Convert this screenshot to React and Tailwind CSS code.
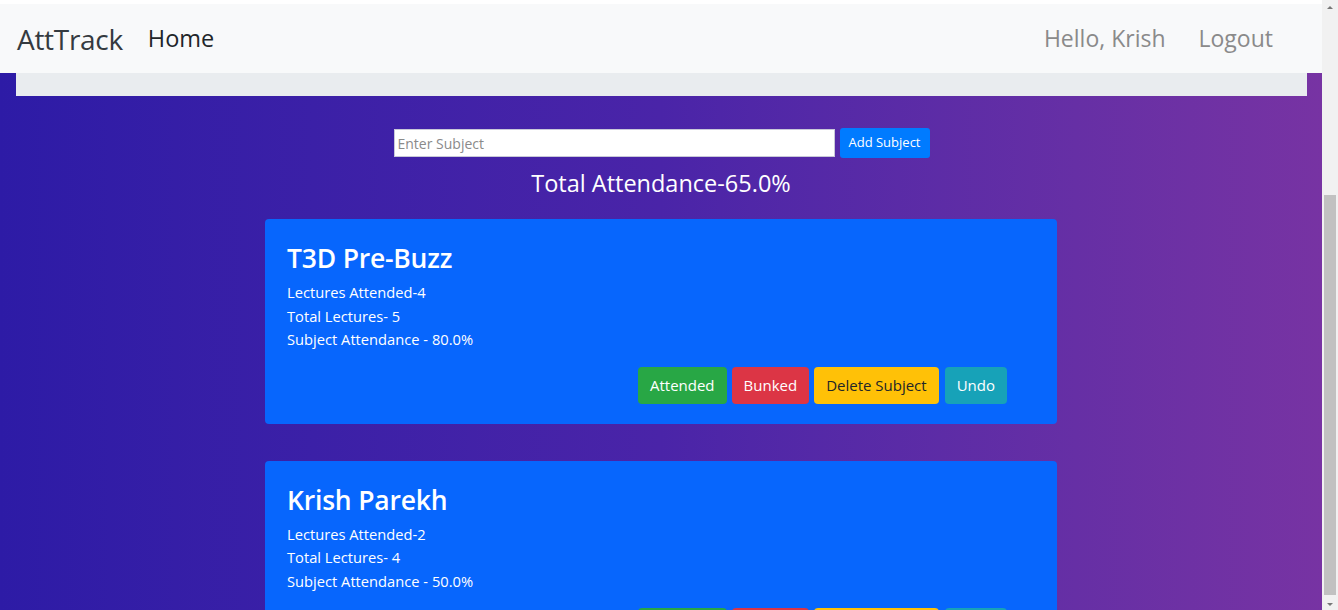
import React from "react";

const font = { fontFamily: '"Open Sans", "Noto Sans", sans-serif' };

function Card({ title, attended, total, pct }) {
  return (
    <div className="w-[792px] shrink-0 rounded-[4px] bg-[#0766fd] px-[22px] pt-[23px] pb-[20px] text-white">
      <h2 className="text-[26.5px] font-semibold leading-[32px] tracking-[-0.2px]">{title}</h2>
      <div className="mt-[7px] text-[14.7px] leading-[23.5px]">
        <p>Lectures Attended-{attended}</p>
        <p>Total Lectures- {total}</p>
        <p>Subject Attendance - {pct}</p>
      </div>
      <div className="mt-[15px] flex justify-end gap-[5px] pr-[28px] text-[15px]">
        <button className="h-[37px] rounded-[4px] bg-[#28a745] px-[12px] text-white">Attended</button>
        <button className="h-[37px] rounded-[4px] bg-[#dc3545] px-[12px] text-white">Bunked</button>
        <button className="h-[37px] rounded-[4px] bg-[#ffc107] px-[12px] text-[#212529]">Delete Subject</button>
        <button className="ml-[1px] h-[37px] rounded-[4px] bg-[#17a2b8] px-[12px] text-white">Undo</button>
      </div>
    </div>
  );
}

export default function App() {
  return (
    <div className="flex h-[610px] w-[1338px] overflow-hidden bg-white" style={font}>
      <div className="flex min-w-0 flex-1 flex-col">
        <div className="h-[4px] shrink-0 bg-white" />
        <nav className="flex h-[69px] shrink-0 items-center bg-[#f8f9fa] pl-[17px] pr-[49px]">
          <span className="text-[28px] text-[#343a40] tracking-[-0.3px]">AttTrack</span>
          <span className="ml-[25px] text-[23.5px] text-[#212529]">Home</span>
          <div className="ml-auto flex gap-[33px] text-[23px] text-[#8a8a8a]">
            <span>Hello, Krish</span>
            <span>Logout</span>
          </div>
        </nav>
        <div className="flex flex-1 flex-col bg-gradient-to-r from-[#2d1ba6] via-[#4a24a8] to-[#7733a3]">
          <div className="ml-[16px] mr-[15px] h-[23px] shrink-0 bg-[#e9ecef]" />
          <div className="flex flex-col items-center">
            <div className="mt-[32px] flex items-center gap-[5px] pl-[1px]">
              <input
                placeholder="Enter Subject"
                className="h-[28px] w-[441px] border border-[#c8c8d8] bg-white px-[3px] text-[14px] text-[#333] placeholder:text-[#8a8a8a] outline-none"
              />
              <button className="h-[30px] w-[90px] rounded-[3px] bg-[#007bff] text-[13px] text-white">Add Subject</button>
            </div>
            <div className="mt-[8px] text-[23.5px] leading-[34px] text-white">Total Attendance-65.0%</div>
            <div className="mt-[19px] flex flex-col gap-[37px]">
              <Card title="T3D Pre-Buzz" attended="4" total="5" pct="80.0%" />
              <Card title="Krish Parekh" attended="2" total="4" pct="50.0%" />
            </div>
          </div>
        </div>
      </div>
      <div className="flex w-[16px] shrink-0 flex-col items-center bg-[#f1f1f1]">
        <div className="mt-[6px] h-0 w-0 border-x-[3px] border-b-[3px] border-x-transparent border-b-[#777]" />
        <div className="mt-[186px] h-[400px] w-[12px] bg-[#c1c1c1]" />
        <div className="mt-auto mb-[4px] h-0 w-0 border-x-[3px] border-t-[3px] border-x-transparent border-t-[#777]" />
      </div>
    </div>
  );
}
